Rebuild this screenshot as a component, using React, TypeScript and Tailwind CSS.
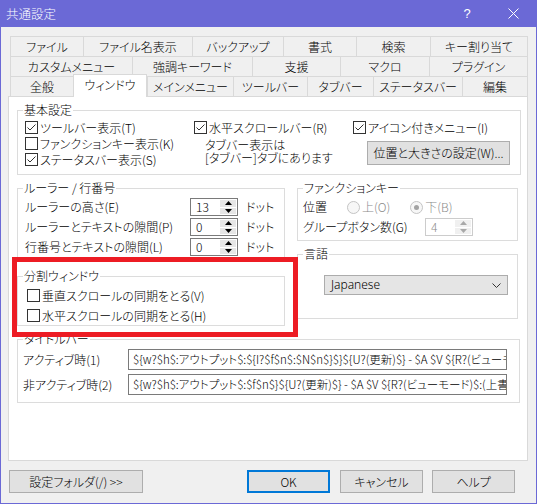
import React from "react";

const row1: [string, number][] = [
  ["ファイル", 73],
  ["ファイル名表示", 109],
  ["バックアップ", 91],
  ["書式", 73],
  ["検索", 74],
  ["キー割り当て", 98],
];
const row2: [string, number][] = [
  ["カスタムメニュー", 122],
  ["強調キーワード", 120],
  ["支援", 88],
  ["マクロ", 89],
  ["プラグイン", 99],
];
const row3: [string, number][] = [
  ["全般", 63],
  ["ウィンドウ", 74],
  ["メインメニュー", 86],
  ["ツールバー", 74],
  ["タブバー", 66],
  ["ステータスバー", 89],
  ["編集", 66],
];

function TabRow({ tabs, selected }: { tabs: [string, number][]; selected?: string }) {
  return (
    <div className="flex h-[20px]">
      {tabs.map(([label, w], i) => {
        const last = i === tabs.length - 1;
        if (label === selected) {
          return (
            <div
              key={label}
              style={{ width: w }}
              className="relative z-10 -mt-[2px] flex h-[23px] shrink-0 items-center justify-center self-start border-x border-t border-[#d9d9d9] bg-white pb-[3px]"
            >
              {label}
            </div>
          );
        }
        return (
          <div
            key={label}
            style={{ width: w }}
            className={`flex h-[20px] shrink-0 items-center justify-center border-l border-t border-[#d9d9d9] bg-[#f0f0f0] ${last ? "border-r" : ""}`}
          >
            {label}
          </div>
        );
      })}
    </div>
  );
}

function Group({ title, className, children }: { title: string; className: string; children?: React.ReactNode }) {
  return (
    <div className={`relative shrink-0 border border-[#dcdcdc] ${className}`}>
      <span className="absolute -top-[8px] left-[5px] bg-white px-[1px] leading-[14px]">{title}</span>
      {children}
    </div>
  );
}

function Check({ checked, label }: { checked?: boolean; label: string }) {
  return (
    <div className="flex h-[13px] items-center">
      <span className="flex h-[13px] w-[13px] shrink-0 items-center justify-center border border-[#333333] bg-white">
        {checked && (
          <svg width="11" height="11" viewBox="0 0 11 11">
            <path d="M1.5 5.5 L4 8 L9.5 2.5" fill="none" stroke="#333333" strokeWidth="1" />
          </svg>
        )}
      </span>
      <span className="ml-[2px] whitespace-nowrap leading-[14px]">{label}</span>
    </div>
  );
}

function Spin({ value, disabled }: { value: string; disabled?: boolean }) {
  const arrow = disabled ? "#a8a8a8" : "#000000";
  return (
    <div
      className={`flex h-[18px] w-[48px] shrink-0 border bg-white ${disabled ? "border-[#cccccc] text-[#8a8a8a]" : "border-[#7a7a7a]"}`}
    >
      <div className="flex-1 pl-[5px] leading-[16px]">{value}</div>
      <div className="my-px mr-px flex w-[16px] flex-col gap-px">
        <div className={`flex flex-1 items-center justify-center ${disabled ? "bg-[#f0f0f0]" : "bg-[#e6e6e6]"}`}>
          <svg width="7" height="4" viewBox="0 0 7 4">
            <path d="M0 4 L3.5 0 L7 4 Z" fill={arrow} />
          </svg>
        </div>
        <div className={`flex flex-1 items-center justify-center ${disabled ? "bg-[#f0f0f0]" : "bg-[#e6e6e6]"}`}>
          <svg width="7" height="4" viewBox="0 0 7 4">
            <path d="M0 0 L7 0 L3.5 4 Z" fill={arrow} />
          </svg>
        </div>
      </div>
    </div>
  );
}

function Radio({ checked, label }: { checked?: boolean; label: string }) {
  return (
    <div className="flex items-center">
      <span className="flex h-[13px] w-[13px] items-center justify-center rounded-full border border-[#c4c4c4] bg-[#f7f7f7]">
        {checked && <span className="h-[5px] w-[5px] rounded-full bg-[#a3a3a3]" />}
      </span>
      <span className="ml-[2px] text-[#8a8a8a]">{label}</span>
    </div>
  );
}

function Btn({ label, className }: { label: string; className: string }) {
  return (
    <div className={`flex h-[23px] shrink-0 items-center justify-center bg-[#e1e1e1] ${className}`}>{label}</div>
  );
}

export default function App() {
  return (
    <div className="relative flex h-[504px] w-[537px] flex-col border-x border-b border-[#6b69d6] bg-[#f0f0f0] font-['Noto_Sans_CJK_JP',sans-serif] text-[12px] font-light leading-[14px] text-black [font-feature-settings:'palt']">
      {/* title bar */}
      <div className="flex h-[27px] shrink-0 items-center bg-[#6b69d6] text-white">
        <span className="ml-[5px] text-[12.5px]">共通設定</span>
        <span className="ml-auto flex w-[46px] justify-center font-['Liberation_Sans',sans-serif] text-[13px]">?</span>
        <span className="flex w-[46px] justify-center">
          <svg width="11" height="11" viewBox="0 0 11 11">
            <path d="M0.5 0.5 L10.5 10.5 M10.5 0.5 L0.5 10.5" stroke="#ffffff" strokeWidth="1" />
          </svg>
        </span>
      </div>

      {/* tabs */}
      <div className="ml-[9px] mt-[9px] w-[518px]">
        <TabRow tabs={row1} />
        <TabRow tabs={row2} />
        <TabRow tabs={row3} selected="ウィンドウ" />
      </div>

      {/* panel */}
      <div className="ml-[7px] h-[365px] w-[520px] shrink-0 border border-[#d9d9d9] bg-white pl-[8px] pt-[13px]">
        {/* 基本設定 */}
        <Group title="基本設定" className="h-[65px] w-[504px]">
          <div className="flex pl-[7px] pt-[10px]">
            <div className="flex w-[169px] flex-col gap-[3px]">
              <Check checked label="ツールバー表示(T)" />
              <Check label="ファンクションキー表示(K)" />
              <Check checked label="ステータスバー表示(S)" />
            </div>
            <div className="flex w-[159px] flex-col">
              <Check checked label="水平スクロールバー(R)" />
              <div className="ml-[11px] mt-[4px] leading-[13px]">
                <div>タブバー表示は</div>
                <div>[タブバー]タブにあります</div>
              </div>
            </div>
            <div className="flex flex-col">
              <Check checked label="アイコン付きメニュー(I)" />
              <Btn label="位置と大きさの設定(W)..." className="ml-[14px] mt-[7px] h-[24px] w-[143px] border border-[#adadad]" />
            </div>
          </div>
        </Group>

        <div className="mt-[13px] flex items-start gap-[12px]">
          {/* left column */}
          <div className="flex flex-col">
            <Group title="ルーラー / 行番号" className="h-[73px] w-[268px]">
              <div className="flex flex-col gap-[2px] pl-[7px] pt-[9px]">
                {[
                  ["ルーラーの高さ(E)", "13"],
                  ["ルーラーとテキストの隙間(P)", "0"],
                  ["行番号とテキストの隙間(L)", "0"],
                ].map(([l, v]) => (
                  <div key={l} className="flex h-[18px] items-center">
                    <span className="w-[165px]">{l}</span>
                    <Spin value={v} />
                    <span className="ml-[8px]">ドット</span>
                  </div>
                ))}
              </div>
            </Group>
            <Group title="分割ウィンドウ" className="mt-[15px] h-[50px] w-[268px]">
              <div className="flex flex-col gap-[7px] pl-[9px] pt-[12px]">
                <Check label="垂直スクロールの同期をとる(V)" />
                <Check label="水平スクロールの同期をとる(H)" />
              </div>
            </Group>
          </div>

          {/* right column */}
          <div className="flex flex-col">
            <Group title="ファンクションキー" className="h-[53px] w-[221px]">
              <div className="flex flex-col gap-[2px] pl-[5px] pt-[9px]">
                <div className="flex h-[18px] items-center">
                  <span className="w-[44px]">位置</span>
                  <Radio label="上(O)" />
                  <span className="ml-[20px]">
                    <Radio checked label="下(B)" />
                  </span>
                </div>
                <div className="flex h-[18px] items-center">
                  <span className="w-[122px]">グループボタン数(G)</span>
                  <Spin value="4" disabled />
                </div>
              </div>
            </Group>
            <Group title="言語" className="mt-[13px] h-[65px] w-[221px]">
              <div className="pl-[26px] pt-[20px]">
                <div className="flex h-[20px] w-[184px] items-center border border-[#acacac] bg-[#e5e5e5] pl-[6px] pr-[6px]">
                  <span className="font-['Noto_Sans',sans-serif]">Japanese</span>
                  <svg className="ml-auto" width="9" height="5" viewBox="0 0 9 5">
                    <path d="M0.5 0.5 L4.5 4.5 L8.5 0.5" fill="none" stroke="#333333" strokeWidth="1" />
                  </svg>
                </div>
              </div>
            </Group>
          </div>
        </div>

        {/* タイトルバー */}
        <Group title="タイトルバー" className="mt-[13px] h-[64px] w-[503px]">
          <div className="flex flex-col gap-[4px] pl-[5px] pt-[9px]">
            {[
              ["アクティブ時(1)", "${w?$h$:アウトプット$:${I?$f$n$:$N$n$}$}${U?(更新)$} - $A $V ${R?(ビューモード)$:(上書き)$}"],
              ["非アクティブ時(2)", "${w?$h$:アウトプット$:$f$n$}${U?(更新)$} - $A $V ${R?(ビューモード)$:(上書き)$}"],
            ].map(([l, v]) => (
              <div key={l} className="flex h-[21px] items-center">
                <span className="w-[105px]">{l}</span>
                <div className="h-[21px] w-[379px] overflow-hidden whitespace-nowrap border border-[#7a7a7a] bg-white pl-[4px] text-[11.5px] leading-[19px]">
                  {v}
                </div>
              </div>
            ))}
          </div>
        </Group>
      </div>

      {/* buttons */}
      <div className="mt-[9px] flex pl-[8px] pr-[21px]">
        <Btn label="設定フォルダ(/) >>" className="w-[134px] border border-[#adadad]" />
        <Btn label="OK" className="ml-auto w-[83px] border-2 border-[#0078d7]" />
        <Btn label="キャンセル" className="ml-[10px] w-[83px] border border-[#adadad]" />
        <Btn label="ヘルプ" className="ml-[9px] w-[83px] border border-[#adadad]" />
      </div>

      {/* red annotation frame */}
      <div className="pointer-events-none absolute left-[11px] top-[257px] h-[80px] w-[286px] border-[5px] border-[#ed1c24]" />
    </div>
  );
}
